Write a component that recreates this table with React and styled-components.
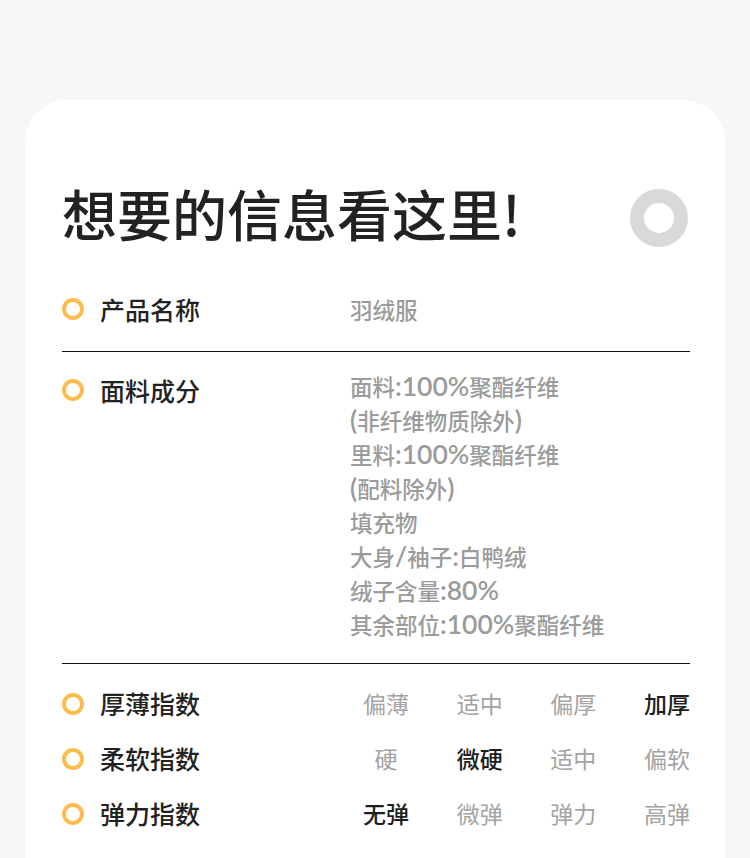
import React from 'react'
import styled, { createGlobalStyle } from 'styled-components'

const GlobalStyle = createGlobalStyle`
    body {
        margin:0;
        background-color:#f7f7f7;
        font-family:"Noto Sans CJK SC", "Noto Sans", sans-serif;
    }
`

const Page = styled.div`
    padding:100px 25px 0 25px;
    height:758px;
    overflow:hidden;
`

const Card = styled.div`
    width:700px;
    min-height:800px;
    background-color:white;
    border-radius:42px 42px 0 0;
    padding:77px 35px 0 37px;
    box-sizing:border-box;
`

const TitleRow = styled.div`
    display:flex;
    align-items:center;
    justify-content:space-between;
    height:70px;
`

const Title = styled.h1`
    margin:0;
    font-size:55px;
    line-height:70px;
    font-weight:500;
    color:#222;
`

const Ring = styled.div`
    width:30px;
    height:30px;
    border:14px solid #d9d9d9;
    border-radius:50%;
    margin:12px 2px 0 0;
`

const Section = styled.div`
    padding:${p => p.$pad};
    border-bottom:1px solid #111;
`

const Row = styled.div`
    display:grid;
    grid-template-columns:288px 1fr;
    align-items:start;
    min-height:${p => p.$h || 34}px;
    line-height:${p => p.$h || 34}px;
`

const Label = styled.div`
    display:flex;
    align-items:center;
    height:${p => p.$h || 34}px;
    margin-top:${p => p.$shift || 0}px;
    font-size:25px;
    font-weight:500;
    color:#222;
`

const Dot = styled.span`
    width:14px;
    height:14px;
    border:4px solid #fcbd4f;
    border-radius:50%;
    margin-right:16px;
    flex-shrink:0;
`

const Values = styled.div`
    font-size:22.5px;
    font-weight:500;
    color:#9b9b9b;
`

const Line = styled.div`
    height:34px;
    line-height:34px;
    white-space:nowrap;
`

const Latin = styled.span`
    font-family:"Lato", sans-serif;
    font-size:26.5px;
    font-weight:600;
    line-height:0;
`

const Options = styled.div`
    display:flex;
    justify-content:space-between;
    padding-left:13px;
    font-size:23px;
`

const Option = styled.span`
    width:46px;
    text-align:center;
    font-weight:${p => (p.$on ? 500 : 400)};
    color:${p => (p.$on ? '#1d1d1d' : '#a3a3a3')};
`

const material = [
    '面料:100%聚酯纤维',
    '(非纤维物质除外)',
    '里料:100%聚酯纤维',
    '(配料除外)',
    '填充物',
    '大身/袖子:白鸭绒',
    '绒子含量:80%',
    '其余部位:100%聚酯纤维',
]

const indexes = [
    { name: '厚薄指数', opts: ['偏薄', '适中', '偏厚', '加厚'], on: 3 },
    { name: '柔软指数', opts: ['硬', '微硬', '适中', '偏软'], on: 1 },
    { name: '弹力指数', opts: ['无弹', '微弹', '弹力', '高弹'], on: 0 },
]

// latin runs are set in a bigger font, like the original
const Text = ({ children }) => (
    <Line>
        {children.split(/([0-9:%/()]+)/).map((s, i) =>
            i % 2 ? <Latin key={i}>{s}</Latin> : s
        )}
    </Line>
)

const App = () => {
    return (
        <Page>
            <GlobalStyle />
            <Card>
                <TitleRow>
                    <Title>想要的信息看这里!</Title>
                    <Ring />
                </TitleRow>
                <Section $pad="45px 0 25px 0">
                    <Row>
                        <Label><Dot />产品名称</Label>
                        <Values><Text>羽绒服</Text></Values>
                    </Row>
                </Section>
                <Section $pad="17px 0 22px 0">
                    <Row>
                        <Label $shift={4}><Dot />面料成分</Label>
                        <Values>
                            {material.map(m => <Text key={m}>{m}</Text>)}
                        </Values>
                    </Row>
                </Section>
                <Section $pad="12px 0 17px 0">
                    {indexes.map(item => (
                        <Row key={item.name} $h={55}>
                            <Label $h={55}><Dot />{item.name}</Label>
                            <Options>
                                {item.opts.map((o, i) => (
                                    <Option key={o} $on={i === item.on}>{o}</Option>
                                ))}
                            </Options>
                        </Row>
                    ))}
                </Section>
            </Card>
        </Page>
    )
}

export default App
